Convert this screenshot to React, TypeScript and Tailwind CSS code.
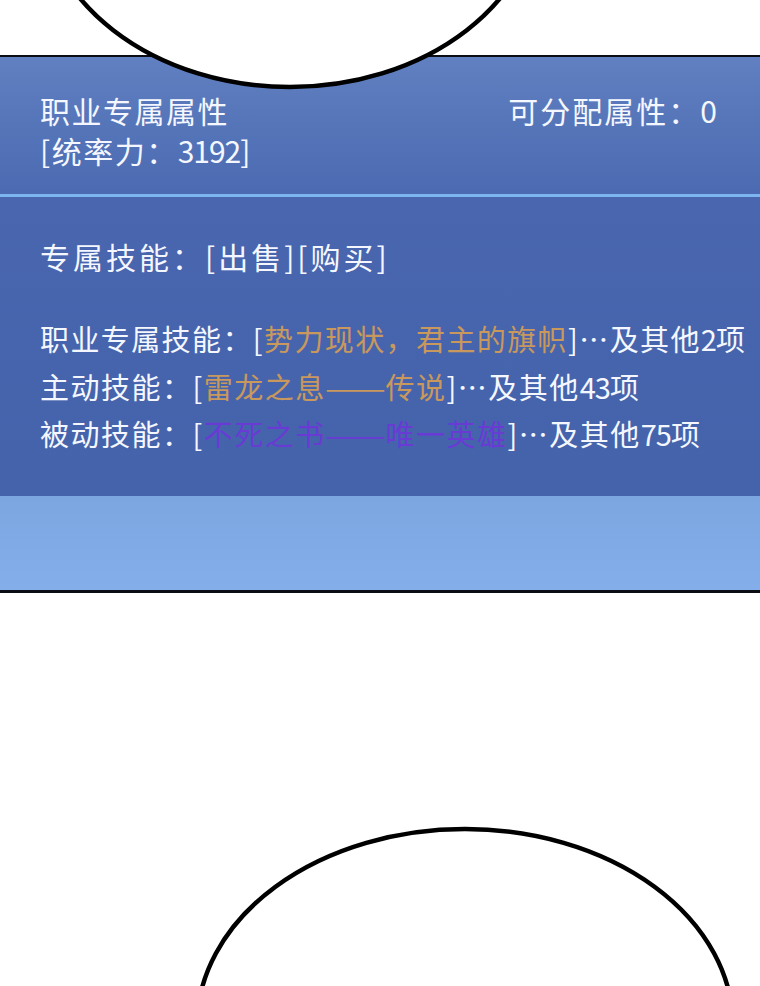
import React from "react";

const font = { fontFamily: '"Noto Sans CJK SC", "Noto Sans", sans-serif' };

function Dash() {
  return <span className="inline-block tracking-[0px] scale-x-[1.25] ml-[5px] mr-[6px]">——</span>;
}

export default function App() {
  return (
    <div className="relative w-[760px] h-[986px] overflow-hidden bg-white" style={font}>
      <div className="h-[55px]" />
      <div className="h-[2px] bg-[#0b0d14]" />
      <div className="flex flex-col">
        <div className="h-[137px] bg-gradient-to-b from-[#6080c1] to-[#4b6ab1] px-[40px] pt-[33px] text-[#f4f7ff] text-[30px] leading-[40px] tracking-[1.5px]">
          <div className="flex justify-between">
            <span>职业专属属性</span>
            <span className="mr-[3px] tracking-[2px]">
              可分配属性：<span className="tracking-[0px]">0</span>
            </span>
          </div>
          <div>
            [统率力：<span className="tracking-[-1px]">3192]</span>
          </div>
        </div>
        <div className="h-[3px] bg-[#7db5f1]" />
        <div className="h-[299px] bg-gradient-to-b from-[#4966af] to-[#4463ab] px-[40px] pt-[39px] text-[#f4f7ff]">
          <div className="text-[30px] leading-[40px] tracking-[3px]">专属技能：[出售][购买]</div>
          <div className="mt-[39px] text-[29px] leading-[47.5px] whitespace-nowrap">
            <div className="tracking-[1.4px]">
              职业专属技能：[<span className="text-[#c9985c]">势力现状，君主的旗帜</span>]…及其他<span className="tracking-[-1px]">2</span>项
            </div>
            <div className="tracking-[1.5px]">
              主动技能：[<span className="text-[#c9985c]">雷龙之息<Dash />传说</span>]…及其他<span className="tracking-[-1px]">43</span>项
            </div>
            <div className="tracking-[1.5px]">
              被动技能：[<span className="text-[#6a3ad4]">不死之书<Dash />唯一英雄</span>]…及其他<span className="tracking-[-1px]">75</span>项
            </div>
          </div>
        </div>
        <div className="h-[94px] bg-gradient-to-b from-[#7ca6e0] to-[#84aeea]" />
        <div className="h-[3px] bg-[#0b0d14]" />
      </div>

      <svg className="absolute left-0 top-0" width="760" height="986" viewBox="0 0 760 986">
        <ellipse cx="290" cy="-107" rx="250" ry="194" fill="#ffffff" stroke="#000000" strokeWidth="4.5" />
        <ellipse cx="465" cy="1026" rx="268" ry="197" fill="#ffffff" stroke="#000000" strokeWidth="4.5" />
      </svg>
    </div>
  );
}
